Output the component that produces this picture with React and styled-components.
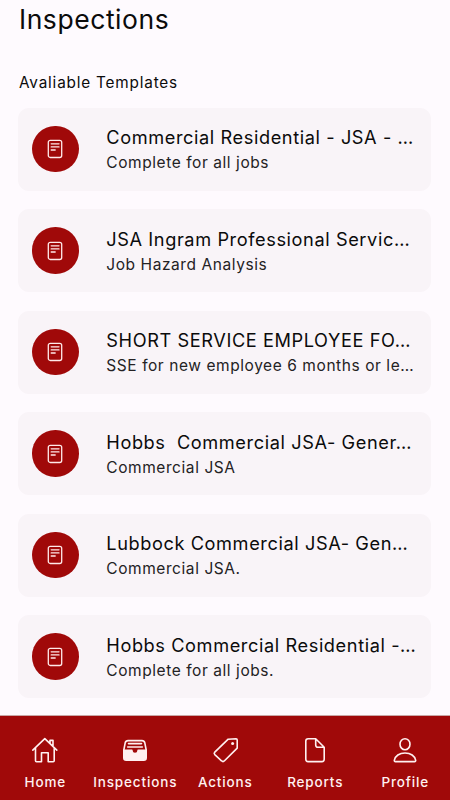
import React from "react";
import styled, { createGlobalStyle } from "styled-components";

const GlobalStyle = createGlobalStyle`
  * {
    box-sizing: border-box;
  }

  body {
    margin: 0;
    background: #fefafe;
    font-family: Inter, "Liberation Sans", sans-serif;
    color: #0b0b0b;
  }
`;

const Screen = styled.div`
  display: flex;
  flex-direction: column;
  width: 100%;
  height: 800px;
  overflow: hidden;
  background: #fefafe;
`;

const Content = styled.main`
  flex: 1;
  min-height: 0;
  padding: 2px 19px 0 18px;
  overflow: hidden;
`;

const Header = styled.h1`
  margin: 0;
  padding-left: 1px;
  font-size: 26.5px;
  line-height: 34px;
  font-weight: 400;
  letter-spacing: 0.55px;
`;

const SubHeader = styled.h2`
  margin: 37px 0 14.5px;
  padding-left: 1px;
  font-size: 15.3px;
  line-height: 20px;
  font-weight: 400;
  letter-spacing: 0.82px;
`;

const List = styled.div`
  display: flex;
  flex-direction: column;
  gap: 18.5px;
`;

const Card = styled.div`
  display: flex;
  align-items: center;
  height: 83px;
  padding-left: 14px;
  border-radius: 11px;
  background: #f9f4f8;
`;

const Badge = styled.div`
  display: flex;
  flex-shrink: 0;
  align-items: center;
  justify-content: center;
  width: 46.5px;
  height: 46.5px;
  margin-right: 27.8px;
  border-radius: 50%;
  background: #a00909;
`;

const CardText = styled.div`
  min-width: 0;
  padding-top: 2px;
  white-space: pre;
`;

const Title = styled.div`
  font-size: 18.2px;
  line-height: 25px;
  letter-spacing: 0.59px;
`;

const Description = styled.div`
  font-size: 15.5px;
  line-height: 25px;
  letter-spacing: 0.57px;
  color: #242224;
`;

const NavBar = styled.nav`
  display: grid;
  grid-template-columns: repeat(5, 1fr);
  height: 85px;
  padding-top: 20px;
  border-top: 1px solid #c9a7a5;
  background: #a00909;
`;

const NavItem = styled.div`
  display: flex;
  flex-direction: column;
  align-items: center;
  color: #fff1f1;

  svg {
    display: block;
  }
`;

const NavLabel = styled.span`
  margin-top: 9px;
  padding-left: 0.5px;
  font-size: 13.5px;
  line-height: 18px;
  font-weight: 500;
  letter-spacing: 0.85px;
  white-space: nowrap;
`;

const DocumentIcon = () => (
  <svg width="16" height="20" viewBox="0 0 16 20" fill="none" stroke="#ffeaea" strokeWidth="1.3" strokeLinecap="round">
    <rect x="1.3" y="1.3" width="13.4" height="17.2" rx="2" />
    <path d="M4.2 4.8h7.8M4.2 7.9h7.8M4.2 11h4" />
  </svg>
);

const NavIcon = ({ children }) => (
  <svg width="28" height="28" viewBox="0 0 28 28" fill="none" stroke="currentColor" strokeWidth="1.6" strokeLinecap="round" strokeLinejoin="round">
    {children}
  </svg>
);

const HomeIcon = () => (
  <NavIcon>
    <path d="M1.8 14.2 13.8 2.7l12 11.5M4.5 12v12.8q0 1 1 1h5v-9h6.7v9h5q1 0 1-1V12M19 7.3V4.4h3v6" />
  </NavIcon>
);

const InspectionsIcon = () => (
  <NavIcon>
    <path d="M2.8 14 4.2 6.8Q4.8 4.6 7 4.6h14q2.2 0 2.8 2.2L25.2 14" />
    <path d="M7.5 7.6h13M6.7 11h14.6" />
    <path d="M2.8 14.2h8.1v.5a3.1 2.8 0 0 0 6.2 0v-.5h8.1v7.6q0 2.4-2.4 2.4H5.2q-2.4 0-2.4-2.4z" fill="currentColor" />
  </NavIcon>
);

const ActionsIcon = () => (
  <NavIcon>
    <path d="M17.2 3.2 25 2.7q1.2 0 1.2 1.2v8.2l-12.7 12.7q-1.5 1.5-3 0L3.8 18.6q-1.2-1.3 0-2.5z" />
    <circle cx="21.6" cy="7.4" r="1.5" fill="currentColor" stroke="none" />
  </NavIcon>
);

const ReportsIcon = () => (
  <NavIcon>
    <path d="M14.7 2.7H7.1q-2.3 0-2.3 2.3v18.3q0 2.3 2.3 2.3h13.8q2.3 0 2.3-2.3V11.2zM14.7 2.7v6.2q0 2.3 2.3 2.3h6.2" />
  </NavIcon>
);

const ProfileIcon = () => (
  <NavIcon>
    <ellipse cx="14" cy="8.2" rx="5" ry="5.5" />
    <path d="M4.4 25.6q-1.2 0-1.1-1.2c.7-4.5 5.2-7.4 10.7-7.4s10 2.9 10.7 7.4q.1 1.2-1.1 1.2z" />
  </NavIcon>
);

const templates = [
  { title: "Commercial Residential - JSA - …", description: "Complete for all jobs" },
  { title: "JSA Ingram Professional Servic…", description: "Job Hazard Analysis" },
  { title: "SHORT SERVICE EMPLOYEE FO…", description: "SSE for new employee 6 months or le…" },
  { title: "Hobbs  Commercial JSA- Gener…", description: "Commercial JSA" },
  { title: "Lubbock Commercial JSA- Gen…", description: "Commercial JSA." },
  { title: "Hobbs Commercial Residential -…", description: "Complete for all jobs." },
];

const navItems = [
  { label: "Home", Icon: HomeIcon },
  { label: "Inspections", Icon: InspectionsIcon },
  { label: "Actions", Icon: ActionsIcon },
  { label: "Reports", Icon: ReportsIcon },
  { label: "Profile", Icon: ProfileIcon },
];

const App = () => {
  return (
    <>
      <GlobalStyle />
      <Screen>
        <Content>
          <Header>Inspections</Header>
          <SubHeader>Avaliable Templates</SubHeader>
          <List>
            {templates.map((template, index) => (
              <Card key={index}>
                <Badge>
                  <DocumentIcon />
                </Badge>
                <CardText>
                  <Title>{template.title}</Title>
                  <Description>{template.description}</Description>
                </CardText>
              </Card>
            ))}
          </List>
        </Content>
        <NavBar>
          {navItems.map(({ label, Icon }) => (
            <NavItem key={label}>
              <Icon />
              <NavLabel>{label}</NavLabel>
            </NavItem>
          ))}
        </NavBar>
      </Screen>
    </>
  );
};

export default App;
